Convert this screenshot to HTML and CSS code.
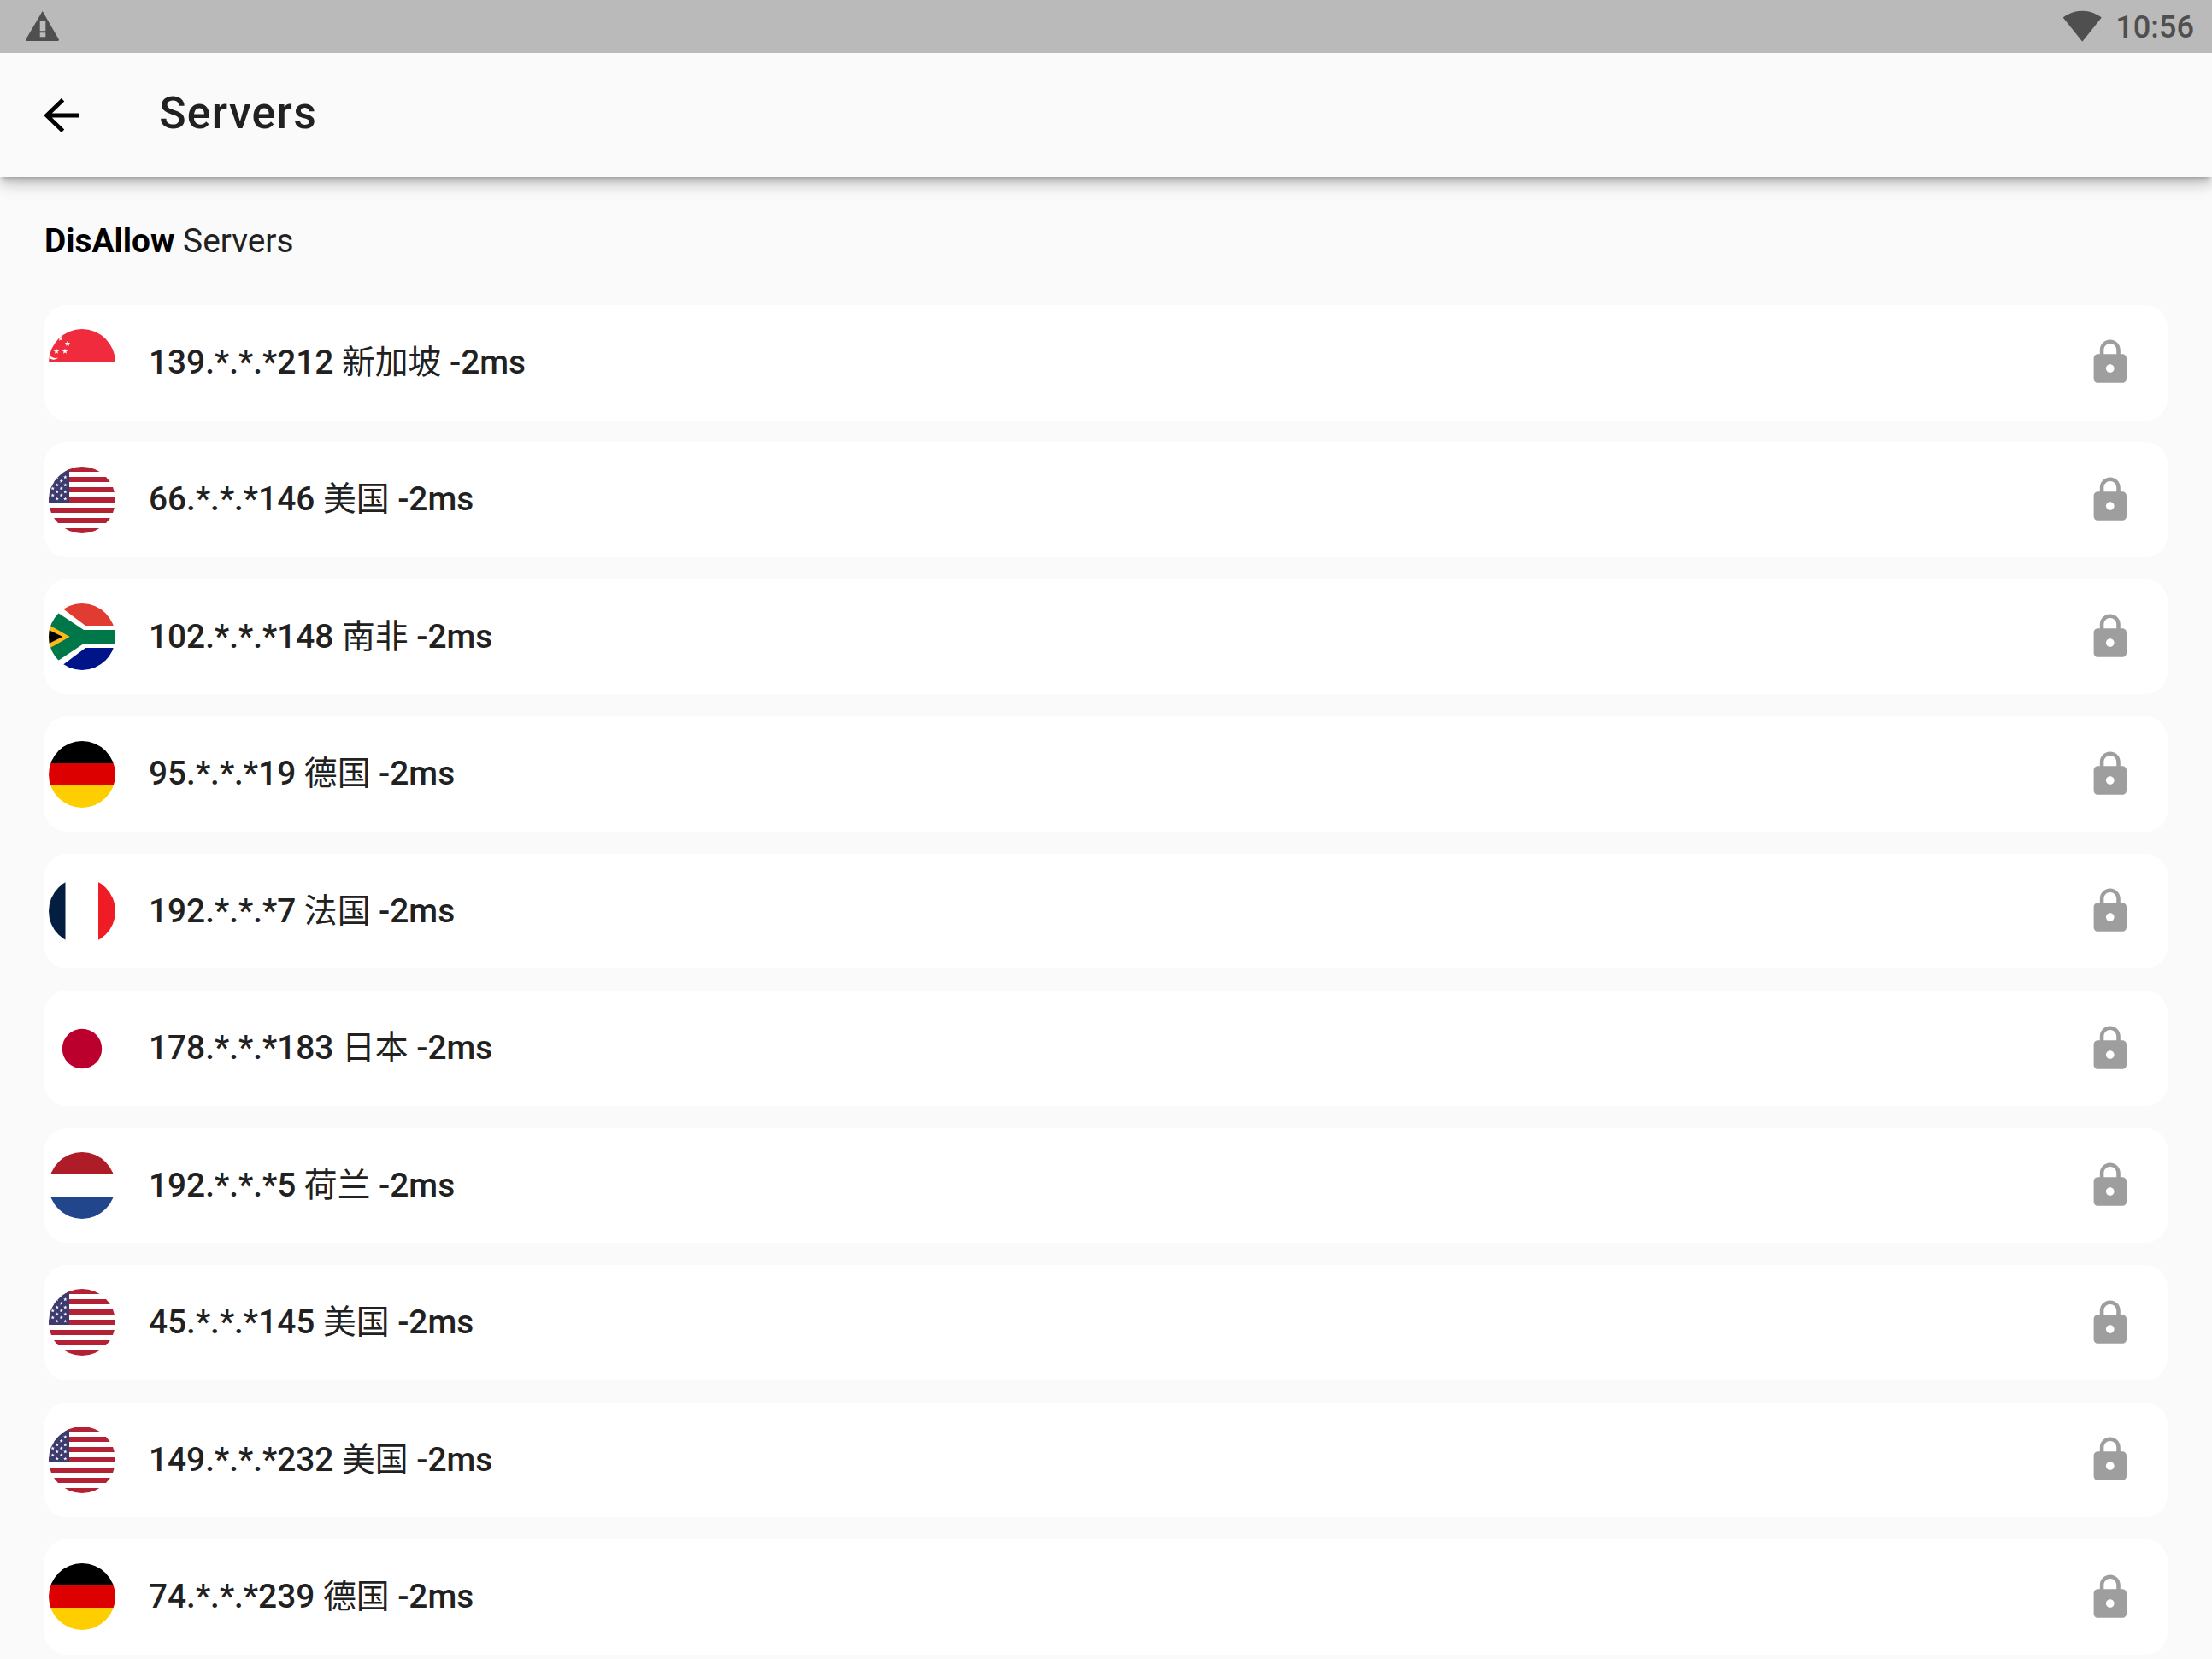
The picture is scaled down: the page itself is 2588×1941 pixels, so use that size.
FILE: index.html
```html
<!DOCTYPE html>
<html lang="zh">
<head>
<meta charset="utf-8">
<title>Servers</title>
<link rel="stylesheet" href="styles.css">
</head>
<body>
<svg class="defs" xmlns="http://www.w3.org/2000/svg">
  <symbol id="star" viewBox="-10 -10 20 20"><polygon points="0,-10 2.4,-3.2 9.5,-3.1 3.8,1.2 5.9,8.1 0,4 -5.9,8.1 -3.8,1.2 -9.5,-3.1 -2.4,-3.2" fill="#fff"/></symbol>
  <symbol id="lock" viewBox="0 0 24 24"><path d="M18 8h-1V6c0-2.76-2.24-5-5-5S7 3.24 7 6v2H6c-1.1 0-2 .9-2 2v10c0 1.1.9 2 2 2h12c1.1 0 2-.9 2-2V10c0-1.1-.9-2-2-2zm-6 9c-1.1 0-2-.9-2-2s.9-2 2-2 2 .9 2 2-.9 2-2 2zm3.1-9H8.9V6c0-1.71 1.39-3.1 3.1-3.1 1.71 0 3.1 1.39 3.1 3.1v2z" fill="#9e9e9e"/></symbol>
  <symbol id="sg" viewBox="0 0 78 78">
    <rect width="78" height="39" fill="#ef2b3d"/>
    <rect y="39" width="78" height="39" fill="#fff"/>
    <use href="#star" x="10.500" y="7.500" width="7" height="7"/>
    <use href="#star" x="18.500" y="13.500" width="7" height="7"/>
    <use href="#star" x="5.500" y="22.500" width="7" height="7"/>
    <use href="#star" x="15.500" y="22.500" width="7" height="7"/>
    <use href="#star" x="3" y="14" width="5" height="5"/>
    <path d="M1 31c3 3 7 3.4 10 2.6C8 36.600 3 36.500 0 33z" fill="#fff"/>
  </symbol>
  <symbol id="us" viewBox="0 0 78 78">
    <rect width="78" height="78" fill="#fff"/>
    <path d="M0 0h78v6H0zM0 12h78v6H0zM0 24h78v6H0zM0 36h78v6H0zM0 48h78v6H0zM0 60h78v6H0zM0 72h78v6H0z" fill="#b22234"/>
    <rect width="24" height="42" fill="#3c3b6e"/>
    <use href="#star" x="17" y="10" width="4.600" height="4.600"/>
    <use href="#star" x="7.400" y="10" width="4.600" height="4.600"/>
    <use href="#star" x="12.400" y="14.700" width="4.600" height="4.600"/>
    <use href="#star" x="2.400" y="14.700" width="4.600" height="4.600"/>
    <use href="#star" x="17" y="19.200" width="4.600" height="4.600"/>
    <use href="#star" x="7.400" y="19.200" width="4.600" height="4.600"/>
    <use href="#star" x="12.400" y="23.200" width="4.600" height="4.600"/>
    <use href="#star" x="2.400" y="23.200" width="4.600" height="4.600"/>
    <use href="#star" x="17" y="27.200" width="4.600" height="4.600"/>
    <use href="#star" x="7.400" y="27.200" width="4.600" height="4.600"/>
    <use href="#star" x="12.400" y="31.200" width="4.600" height="4.600"/>
    <use href="#star" x="2.400" y="31.200" width="4.600" height="4.600"/>
    <use href="#star" x="17" y="35.400" width="4.600" height="4.600"/>
    <use href="#star" x="7.400" y="35.400" width="4.600" height="4.600"/>
  </symbol>
  <symbol id="za" viewBox="0 0 78 78">
    <rect width="78" height="78" fill="#fff"/>
    <polygon points="8.400,0 78,0 78,26 43,26" fill="#e03c31"/>
    <polygon points="8.400,78 78,78 78,52 43,52" fill="#001489"/>
    <polygon points="0,3.700 41,31 78,31 78,47 41,47 0,74.300" fill="#007749"/>
    <polygon points="0,25 24.700,39 0,53" fill="#ffb81c"/>
    <polygon points="0,31 16.300,39 0,47" fill="#000"/>
  </symbol>
  <symbol id="de" viewBox="0 0 78 78">
    <rect width="78" height="26" fill="#000"/>
    <rect y="26" width="78" height="26" fill="#d00"/>
    <rect y="52" width="78" height="26" fill="#ffce00"/>
  </symbol>
  <symbol id="fr" viewBox="0 0 78 78">
    <rect width="78" height="78" fill="#fff"/>
    <rect width="19.500" height="78" fill="#041e42"/>
    <rect x="58" width="20" height="78" fill="#ef1c25"/>
  </symbol>
  <symbol id="jp" viewBox="0 0 78 78">
    <rect width="78" height="78" fill="#fff"/>
    <circle cx="39" cy="39" r="23.200" fill="#bc002d"/>
  </symbol>
  <symbol id="nl" viewBox="0 0 78 78">
    <rect width="78" height="26" fill="#ae1c28"/>
    <rect y="26" width="78" height="26" fill="#fff"/>
    <rect y="52" width="78" height="26" fill="#21468b"/>
  </symbol>
</svg>

<div class="status">
  <svg class="warn" viewBox="0 0 39 35"><path fill-rule="evenodd" d="M19.700 0L39 33.600 38.200 35H.8L0 33.600zM16.700 11.300v12h6.600v-12zM16.700 25.300v5h6.600v-5z"/></svg>
  <div class="status-right">
    <svg class="wifi" viewBox="0 0 24 24"><path d="M12.010 21.490L23.640 7c-.45-.34-4.930-4-11.640-4C5.280 3 .81 6.660.36 7l11.640 14.490.01.01.01-.01z"/></svg>
    <span class="time">10:56</span>
  </div>
</div>

<header class="appbar">
  <svg class="back" viewBox="0 0 24 24"><path d="M20 12H5.200M12.600 4.900 5.300 12l7.300 7.100"/></svg>
  <h1 class="title">Servers</h1>
</header>

<main class="content">
  <p class="heading"><strong class="heading-strong">DisAllow</strong> Servers</p>
  <ul class="list">
    <li class="card"><svg class="flag"><use href="#sg"/></svg><span class="label">139.*.*.*212 <span class="cjk">新加坡</span> -2ms</span><svg class="lock"><use href="#lock"/></svg></li>
    <li class="card"><svg class="flag"><use href="#us"/></svg><span class="label">66.*.*.*146 <span class="cjk">美国</span> -2ms</span><svg class="lock"><use href="#lock"/></svg></li>
    <li class="card"><svg class="flag"><use href="#za"/></svg><span class="label">102.*.*.*148 <span class="cjk">南非</span> -2ms</span><svg class="lock"><use href="#lock"/></svg></li>
    <li class="card"><svg class="flag"><use href="#de"/></svg><span class="label">95.*.*.*19 <span class="cjk">德国</span> -2ms</span><svg class="lock"><use href="#lock"/></svg></li>
    <li class="card"><svg class="flag"><use href="#fr"/></svg><span class="label">192.*.*.*7 <span class="cjk">法国</span> -2ms</span><svg class="lock"><use href="#lock"/></svg></li>
    <li class="card"><svg class="flag"><use href="#jp"/></svg><span class="label">178.*.*.*183 <span class="cjk">日本</span> -2ms</span><svg class="lock"><use href="#lock"/></svg></li>
    <li class="card"><svg class="flag"><use href="#nl"/></svg><span class="label">192.*.*.*5 <span class="cjk">荷兰</span> -2ms</span><svg class="lock"><use href="#lock"/></svg></li>
    <li class="card"><svg class="flag"><use href="#us"/></svg><span class="label">45.*.*.*145 <span class="cjk">美国</span> -2ms</span><svg class="lock"><use href="#lock"/></svg></li>
    <li class="card"><svg class="flag"><use href="#us"/></svg><span class="label">149.*.*.*232 <span class="cjk">美国</span> -2ms</span><svg class="lock"><use href="#lock"/></svg></li>
    <li class="card"><svg class="flag"><use href="#de"/></svg><span class="label">74.*.*.*239 <span class="cjk">德国</span> -2ms</span><svg class="lock"><use href="#lock"/></svg></li>
  </ul>
</main>
</body>
</html>
```

FILE: styles.css
```css
* { box-sizing: border-box; }
html, body { margin: 0; height: 1941px; overflow: hidden; }
body {
  background: #fafafa;
  font-family: Roboto, "Noto Sans CJK SC", sans-serif;
  color: #212121;
  display: flex;
  flex-direction: column;
}
.defs { display: none; }

.status {
  flex: 0 0 62px;
  background: #bababa;
  display: flex;
  align-items: center;
  justify-content: space-between;
  padding: 0 21px 0 30px;
  position: relative;
  z-index: 2;
}
.warn { width: 39px; height: 35px; fill: #4f4f4f; margin-top: -1.500px; }
.status-right { display: flex; align-items: center; gap: 16px; }
.wifi { width: 46.500px; height: 46.500px; fill: #4f4f4f; margin-top: -2px; }
.time { font-size: 36.200px; font-weight: 500; color: #4f4f4f; line-height: 1; padding-top: 2px; }

.appbar {
  flex: 0 0 145px;
  background: #fafafa;
  display: flex;
  align-items: center;
  padding-left: 41.400px;
  gap: 82.800px;
  box-shadow: 0 5.200px 5.200px -2.600px rgba(0,0,0,.2), 0 10.400px 13px 0 rgba(0,0,0,.14), 0 2.600px 26px 0 rgba(0,0,0,.12);
  position: relative;
  z-index: 1;
}
.back { width: 62px; height: 62px; fill: none; stroke: #000; stroke-width: 1.900; flex: none; }
.title { margin: 0 0 3px; font-size: 51.760px; font-weight: 500; letter-spacing: 1.300px; color: #212121; line-height: 1; }

.content { padding: 52px 52px 0; flex: 1; min-height: 0; }
.heading { margin: 0 0 52px; font-size: 38.820px; line-height: 46px; color: #212121; }
.heading-strong { font-weight: 700; color: #000; }

.list { list-style: none; margin: 0; padding: 0; display: flex; flex-direction: column; gap: 25.880px; }
.card {
  height: 134.580px;
  flex: none;
  background: #fff;
  border-radius: 26px;
  display: flex;
  align-items: center;
  padding: 0 38.800px 0 5.200px;
}
.flag { width: 78px; height: 78px; border-radius: 50%; flex: none; }
.label { flex: 1; margin: 0 0 8.500px 38.800px; font-size: 38.820px; font-weight: 500; color: #212121; white-space: nowrap; }
.cjk { font-weight: 400; }
.lock { width: 57.600px; height: 57.600px; flex: none; }
```
